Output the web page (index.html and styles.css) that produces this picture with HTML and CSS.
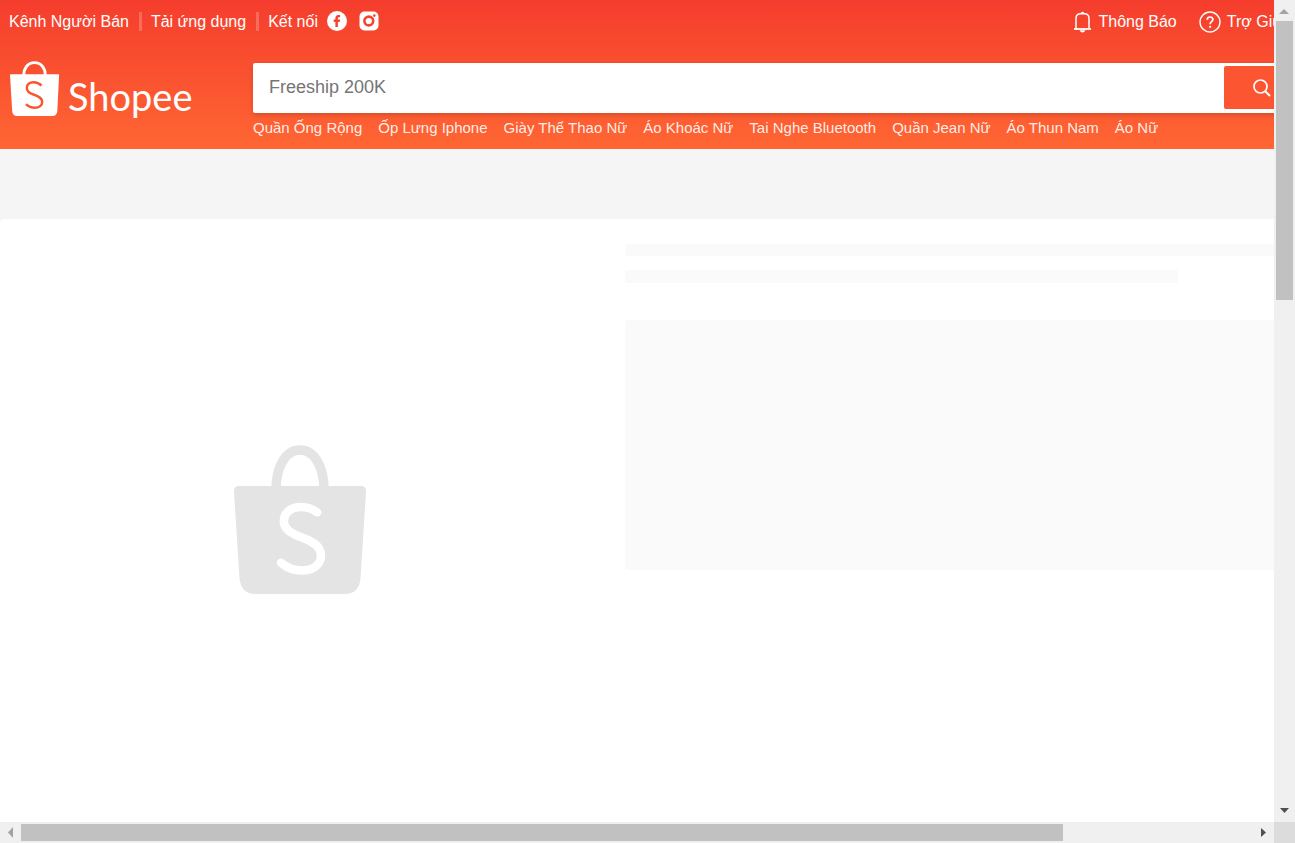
FILE: index.html
```html
<!DOCTYPE html>
<html lang="vi">
<head>
<meta charset="utf-8">
<title>Shopee</title>
<link rel="stylesheet" href="styles.css">
</head>
<body>
<div class="frame">
  <div class="viewport">
    <div class="page">
      <header class="header">
        <nav class="topbar">
          <a class="toplink" href="#">Kênh Người Bán</a>
          <span class="divider"></span>
          <a class="toplink" href="#">Tải ứng dụng</a>
          <span class="divider"></span>
          <span class="toplink">Kết nối</span>
          <a class="social" href="#" aria-label="Facebook">
            <svg width="20" height="20" viewBox="0 0 20 20"><circle cx="10" cy="10" r="10" fill="#fff"/><path d="M8.400 16v-5.100H6.700V8.500h1.700V7.100c0-2.100 1.100-3.200 3.100-3.200h1.600v2.300h-1.200c-.7 0-1 .3-1 1v1.300h2.200l-.4 2.400h-1.800V16z" fill="#f6432e"/></svg>
          </a>
          <a class="social" href="#" aria-label="Instagram">
            <svg width="20" height="20" viewBox="0 0 20 20"><rect x="0.500" y="0.500" width="19" height="19" rx="5" fill="#fff"/><circle cx="9.800" cy="10" r="4.400" fill="none" stroke="#f6432e" stroke-width="2.600"/><circle cx="15.300" cy="4.600" r="1.300" fill="#f6432e"/></svg>
          </a>
          <div class="account">
            <a class="action" href="#">
              <svg width="19" height="22" viewBox="0 0 19 22" fill="none" stroke="#fff" stroke-width="1.500"><path d="M3 17.500V7.500Q3 2.700 7.500 2.700h4Q16 2.700 16 7.500v10"/><path d="M1 18h17" stroke-width="1.800"/><path d="M8.300 2.200q1.200-1.300 2.400 0"/><path d="M6.500 19.200h6q-1.200 2.300-3 2.300t-3-2.300z" fill="#fff" stroke="none"/></svg>
              Thông Báo
            </a>
            <a class="action" href="#">
              <svg width="22" height="22" viewBox="0 0 22 22" fill="none" stroke="#fff" stroke-width="1.400"><circle cx="11" cy="11" r="10"/><path d="M8.200 8.800Q8.200 6 11 6t2.900 2.600c0 2-2.800 2.300-2.800 4.700" stroke-width="1.700"/><circle cx="11.100" cy="15.800" r="1.100" fill="#fff" stroke="none"/></svg>
              Trợ Giúp
            </a>
          </div>
        </nav>
        <div class="mainbar">
          <a class="logo" href="#" aria-label="Shopee">
            <svg width="50" height="56" viewBox="0 0 50 56"><path d="M13.700 14.500C13.700 7 18 1.600 24.500 1.600S35.400 7 35.400 14.500" fill="none" stroke="#fff" stroke-width="2.800"/><path d="M.8 13.200h47.500q.9 0 .8 1L47.300 50q-.3 5-5 5H7.200q-4.700 0-5-5L0 14.200q0-1 .8-1z" fill="#fff"/><path d="M31.500 24.500Q28 21.200 23.700 21.200C19.500 21.200 16.800 23.600 16.800 27c0 3.700 2.800 5.300 7.300 6.800 5 1.700 8.100 3.300 8.100 7 0 3.600-3 6-7.400 6q-5 0-8.800-3.600" fill="none" stroke="#fb5530" stroke-width="2.500"/></svg>
            <span class="wordmark">Shopee</span>
          </a>
          <div class="searcharea">
            <form class="search">
              <input class="searchinput" type="text" placeholder="Freeship 200K" aria-label="Tìm kiếm">
              <button class="searchbutton" type="button" aria-label="Tìm">
                <svg width="18" height="18" viewBox="0 0 18 18" fill="none" stroke="#fff" stroke-width="1.700"><circle cx="7.500" cy="7.500" r="6.500"/><path d="M12.200 12.200L17 17" stroke-width="2"/></svg>
              </button>
            </form>
            <div class="tags">
              <a href="#">Quần Ống Rộng</a>
              <a href="#">Ốp Lưng Iphone</a>
              <a href="#">Giày Thể Thao Nữ</a>
              <a href="#">Áo Khoác Nữ</a>
              <a href="#">Tai Nghe Bluetooth</a>
              <a href="#">Quần Jean Nữ</a>
              <a href="#">Áo Thun Nam</a>
              <a href="#">Áo Nữ</a>
            </div>
          </div>
        </div>
      </header>
      <main class="content">
        <section class="product">
          <div class="preview">
            <svg width="134" height="150" viewBox="0 0 134 150"><path d="M43 45C43 21 53 5 67 5s24 16 24 40" fill="none" stroke="#e4e4e4" stroke-width="9.500"/><path d="M6 41h122q5.300 0 5 6l-5.500 86q-1.300 16-15.500 16H22Q8 149 6.500 133L1 47q-.3-6 5-6z" fill="#e4e4e4"/><path d="M84.200 67.300Q77 62 68 62C57 62 50.800 68.500 50.800 76c0 8 6.700 12 16.700 16 11.500 4 20.500 9 20.500 18.500C88 119.500 80 125.500 69 125.500q-12 0-21-7.800" fill="none" stroke="#fff" stroke-width="8.500" stroke-linecap="round"/></svg>
          </div>
          <div class="skeleton">
            <div class="line"></div>
            <div class="line line-short"></div>
            <div class="block"></div>
          </div>
        </section>
      </main>
    </div>
  </div>
  <div class="scroll scroll-y">
    <svg class="arrow" viewBox="0 0 21 21"><path d="M5 14h10l-5-5z" fill="#a3a3a3"/></svg>
    <div class="thumb thumb-y"></div>
    <div class="rest-y"></div>
    <svg class="arrow" viewBox="0 0 21 21"><path d="M6 7h9l-4.500 5z" fill="#505050"/></svg>
  </div>
  <div class="scroll scroll-x">
    <svg class="arrow" viewBox="0 0 21 21"><path d="M13 5v11l-5-5.500z" fill="#a3a3a3"/></svg>
    <div class="thumb thumb-x"></div>
    <div class="rest-x"></div>
    <svg class="arrow" viewBox="0 0 21 21"><path d="M8 6v9l5-4.500z" fill="#505050"/></svg>
  </div>
  <div class="corner"></div>
</div>
</body>
</html>
```
FILE: styles.css
```css
* { box-sizing: border-box; }
body {
  margin: 0;
  font-family: "Liberation Sans", Arial, sans-serif;
  font-size: 16px;
  background: #fff;
}
a { color: inherit; text-decoration: none; }
svg { display: block; flex: none; }

.frame {
  display: grid;
  grid-template-columns: minmax(0, 1fr) 21px;
  grid-template-rows: minmax(0, 1fr) 21px;
  height: 100vh;
}
.viewport { overflow: hidden; background: #f5f5f5; }
.page { width: calc(100% + 226px); }

.header {
  padding-bottom: 11px;
  background: linear-gradient(180deg, #f53d2d, #ff6633);
  color: #fff;
}
.topbar {
  display: flex;
  align-items: center;
  height: 42px;
  padding: 0 210px 0 9px;
}
.toplink, .action { line-height: 20px; white-space: nowrap; }
.toplink { padding-top: 1px; }
.divider {
  width: 3px;
  height: 19px;
  margin: 0 9px 0 10px;
  background: rgba(255, 255, 255, 0.22);
}
.social { margin-left: 9px; }
.social + .social { margin-left: 12px; }
.account { display: flex; gap: 22px; margin-left: auto; padding-top: 1px; }
.action { display: flex; align-items: center; gap: 6px; }

.mainbar {
  display: flex;
  align-items: flex-start;
  padding: 19px 198px 0 10px;
}
.logo { display: flex; flex: none; gap: 8px; width: 243px; }
.wordmark {
  padding-top: 11px;
  font-family: Lato, sans-serif;
  font-size: 38px;
  line-height: 48px;
}
.searcharea { flex: 1; padding-top: 2px; }
.search {
  display: flex;
  height: 50px;
  padding: 3px;
  border-radius: 2px;
  background: #fff;
  box-shadow: 0 2px 5px rgba(0, 0, 0, 0.16);
}
.searchinput {
  flex: 1;
  min-width: 0;
  padding: 0 13px 2px;
  border: 0;
  outline: 0;
  background: transparent;
  font: inherit;
  font-size: 18px;
}
.searchinput::placeholder { color: #757575; opacity: 1; }
.searchbutton {
  display: flex;
  align-items: center;
  justify-content: center;
  width: 75px;
  height: 43px;
  padding: 0;
  border: 0;
  border-radius: 2px;
  background: #fc5531;
}
.tags {
  display: flex;
  gap: 16px;
  padding-top: 5px;
  font-size: 15px;
  line-height: 20px;
  color: rgba(255, 255, 255, 0.9);
  white-space: nowrap;
}

.content { padding-top: 70px; }
.product {
  display: flex;
  min-height: 750px;
  border-radius: 4px;
  background: #fff;
}
.preview {
  display: flex;
  align-items: center;
  justify-content: center;
  flex: none;
  width: 600px;
  height: 602px;
}
.skeleton { flex: 1; padding: 25px; }
.line { height: 12px; border-radius: 2px; background: #fafafa; }
.line-short { width: 65%; height: 13px; margin-top: 14px; }
.block { height: 250px; margin-top: 37px; border-radius: 2px; background: #fafafa; }

.scroll { display: flex; background: #f0f0f0; }
.scroll-y { flex-direction: column; align-items: center; }
.scroll-x { align-items: center; }
.arrow { width: 21px; height: 21px; }
.thumb { background: #c1c1c1; }
.thumb-y { flex: 279; width: 17px; }
.rest-y { flex: 501; }
.thumb-x { flex: 1042; height: 17px; }
.rest-x { flex: 190; }
.corner { background: #dcdcdc; }
```
